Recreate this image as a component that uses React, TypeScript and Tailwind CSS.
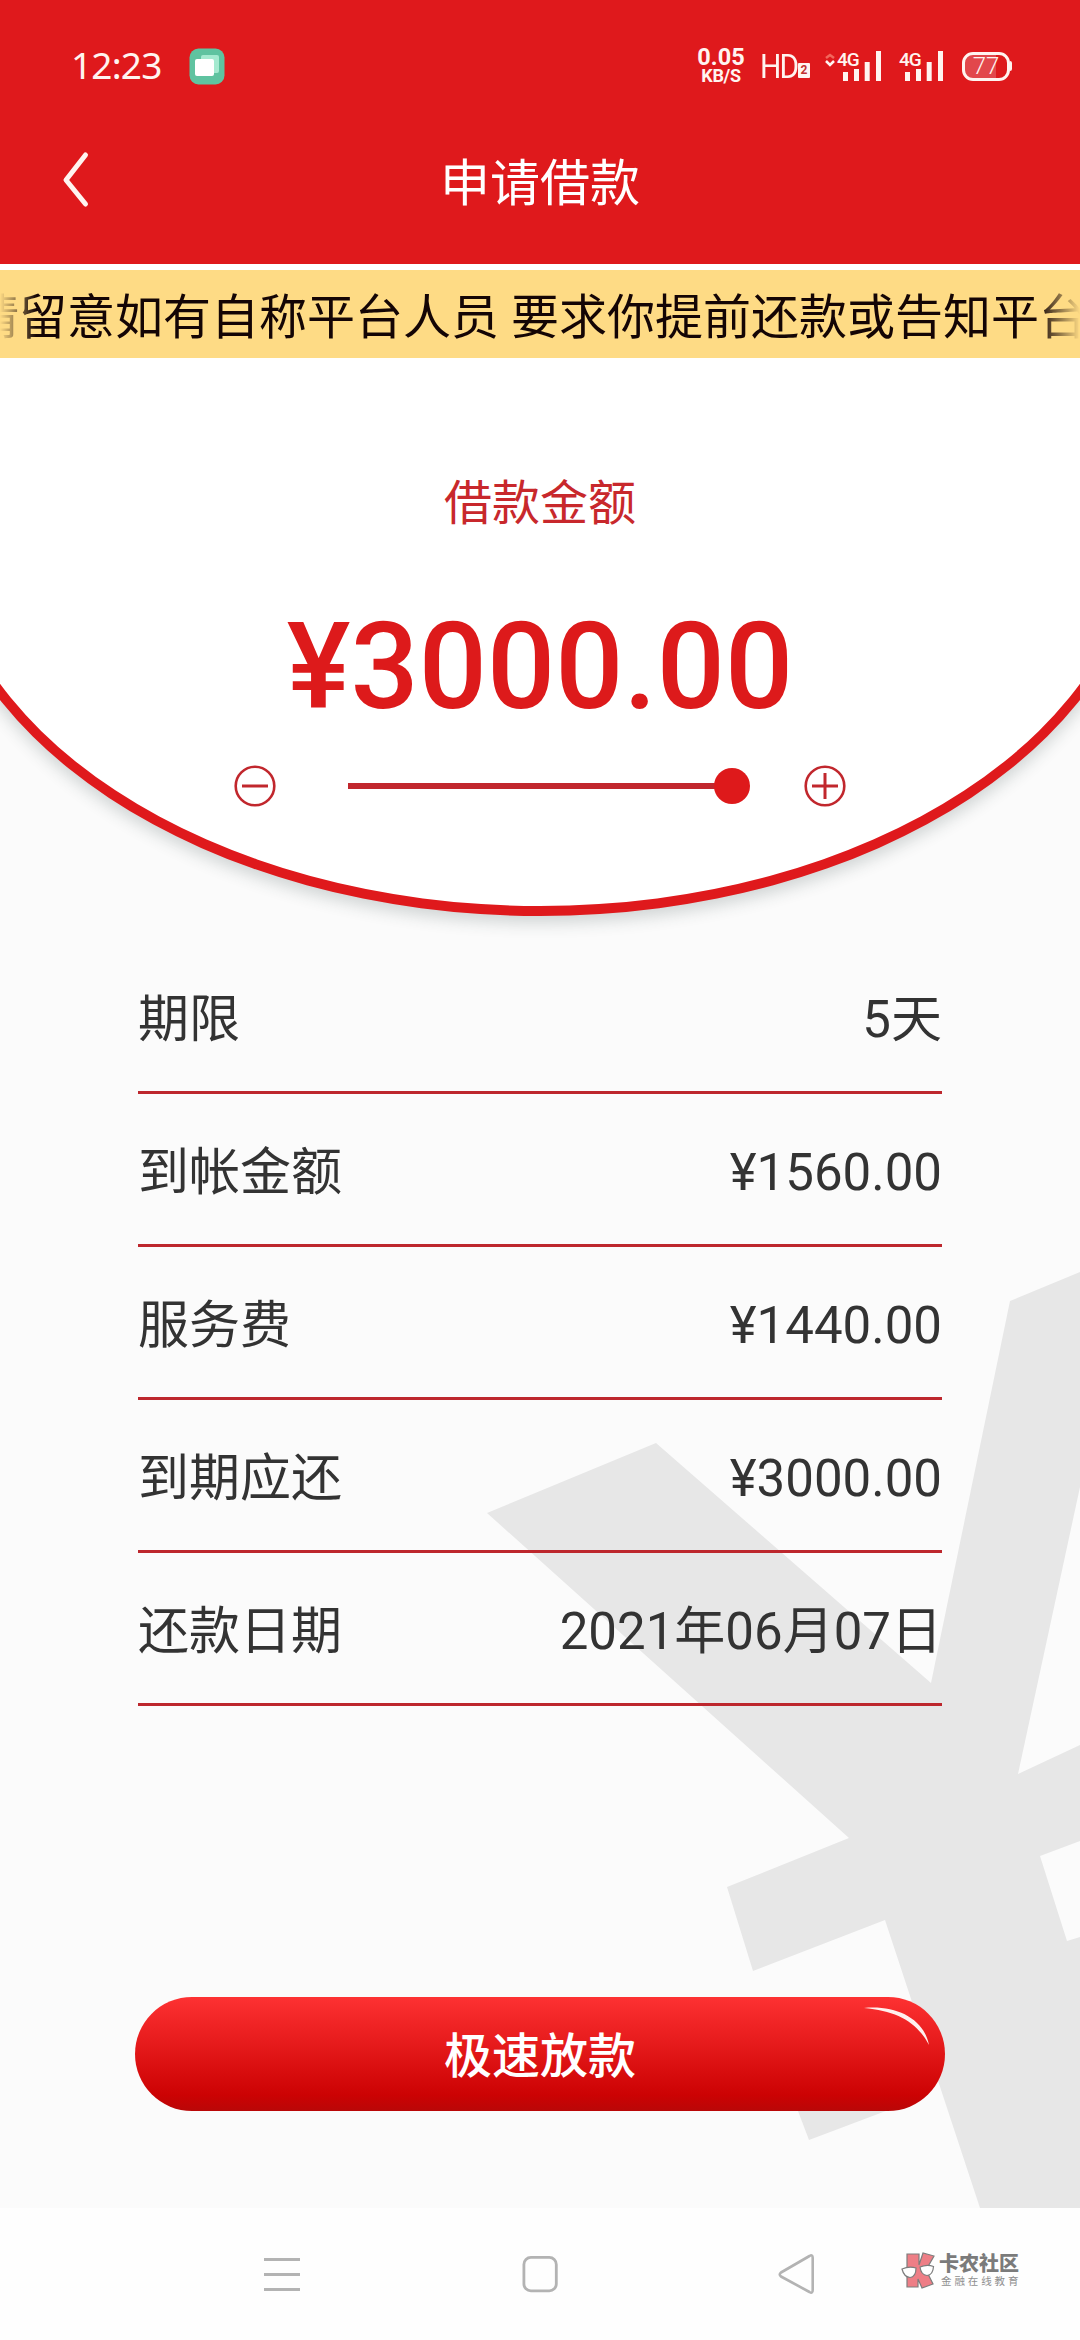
import React from "react";

interface DetailItem {
  label: string;
  value: string;
}

const details: DetailItem[] = [
  { label: "期限", value: "5天" },
  { label: "到帐金额", value: "¥1560.00" },
  { label: "服务费", value: "¥1440.00" },
  { label: "到期应还", value: "¥3000.00" },
  { label: "还款日期", value: "2021年06月07日" },
];

const SignalBars: React.FC = () => (
  <div className="relative w-[44px] h-[30px]">
    <span className="absolute left-0 top-[1px] text-[19px] leading-[16px] font-medium tracking-[-1px]">4G</span>
    <svg className="w-[44px] h-[30px]" viewBox="0 0 44 30" fill="#fff4f0">
      <rect x="6" y="21" width="5" height="9" />
      <rect x="17" y="18" width="5" height="12" />
      <rect x="27.7" y="11" width="5" height="19" />
      <rect x="39" y="0" width="5" height="30" />
    </svg>
  </div>
);

const StatusBar: React.FC = () => (
  <div className="h-[132px] flex items-center pl-[71px] pr-[68px] text-[#fff4f0]">
    <span className="w-[118px] text-[37px] leading-none tracking-[-0.8px] -mt-[3px] font-['Noto_Sans',sans-serif]">12:23</span>
    <svg className="w-[36px] h-[37px]" viewBox="0 0 36 37">
      <rect x="0.5" y="0.5" width="35" height="36" rx="9" fill="#5fc3a0" />
      <rect x="12" y="7" width="18" height="18" rx="2" fill="#a5ead0" />
      <rect x="6" y="11" width="19" height="17" rx="2" fill="#ffffff" />
    </svg>
    <div className="ml-auto flex items-center">
      <div className="w-[48px] flex flex-col items-center font-bold">
        <span className="text-[23.5px] leading-[20px]">0.05</span>
        <span className="text-[18px] leading-[18px] tracking-[-0.3px]">KB/S</span>
      </div>
      <div className="ml-[15px] w-[51px] flex items-end">
        <span className="w-[38px] text-[34px] leading-[30px] font-normal tracking-[-2px] origin-left scale-x-[0.88]">HD</span>
        <span className="mb-[3px] w-[12px] h-[15px] rounded-[1px] bg-[#fff4f0] text-[#c03030] text-[12px] leading-[15px] font-bold text-center">2</span>
      </div>
      <svg className="ml-[14px] mb-[12px] w-[10px] h-[14px]" viewBox="0 0 10 14" fill="none" strokeWidth="2.5">
        <path d="M1 5 L5 2 L9 5" stroke="#f2675c" />
        <path d="M1 8 L5 12 L9 8" stroke="#fff4f0" />
      </svg>
      <div className="ml-[2px]">
        <SignalBars />
      </div>
      <div className="ml-[18px]">
        <SignalBars />
      </div>
      <div className="ml-[19px] flex items-center">
        <div className="w-[48px] h-[29px] rounded-[11px] border-[3px] border-[#fff4f0] bg-[linear-gradient(to_right,#e2474b_74%,#dd1a1c_74%)] flex items-center justify-center text-[24px] leading-none font-light">
          77
        </div>
        <div className="w-[2px] h-[10px] rounded-r bg-[#fff4f0]" />
      </div>
    </div>
  </div>
);

const Header: React.FC = () => (
  <header className="h-[264px] shrink-0 bg-[#df191c]">
    <StatusBar />
    <div className="h-[102px] grid grid-cols-[1fr_auto_1fr] items-center text-white">
      <svg className="ml-[62px] mb-[7px] w-[30px] h-[58px]" viewBox="0 0 30 58" fill="none">
        <path d="M23.500 4 L4 29 L23.500 53" stroke="#fff4f0" strokeWidth="5" strokeLinecap="round" strokeLinejoin="round" />
      </svg>
      <h1 className="pt-[2px] text-[50px] leading-none font-normal">申请借款</h1>
    </div>
  </header>
);

const Notice: React.FC = () => (
  <div className="mt-[6px] h-[88px] shrink-0 bg-[#fedb85] overflow-hidden">
    <p className="h-full pt-[7px] flex items-center text-[48px] leading-none text-[#140505] whitespace-nowrap [mask-image:linear-gradient(to_right,transparent,black_36px,black_1038px,transparent)]">
      <span className="-ml-[29px] whitespace-pre">请留意如有自称平台人员 要求你提前还款或告知平台</span>
    </p>
  </div>
);

const AmountPicker: React.FC = () => (
  <section className="h-[600px] flex justify-center overflow-hidden">
    <div className="shrink-0 -mt-[250px] w-[1220px] h-[808px] rounded-[50%] border-[10.5px] border-[#df191c] bg-white shadow-[0_7px_16px_rgba(40,60,60,0.2)] flex flex-col items-center">
      <p className="mt-[358px] text-[48px] leading-[56px] text-[#c8282c]">借款金额</p>
      <p className="mt-[65px] text-[120px] leading-[140px] font-medium text-[#dd1a1b]">¥3000.00</p>
      <div className="mt-[27px] w-[612px] h-[44px] flex items-center">
        <svg className="w-[42px] h-[42px]" viewBox="0 0 42 42" fill="none" stroke="#c1272d" strokeWidth="2.6">
          <circle cx="21" cy="21" r="19.3" />
          <path d="M8 21 H34" strokeWidth="3" />
        </svg>
        <div className="ml-[72px] w-[402px] flex items-center">
          <div className="h-[6px] flex-1 bg-[#c1272d]" />
          <div className="-ml-[2px] w-[36px] h-[36px] rounded-full bg-[#de191b]" />
        </div>
        <svg className="ml-auto w-[42px] h-[42px]" viewBox="0 0 42 42" fill="none" stroke="#c1272d" strokeWidth="2.6">
          <circle cx="21" cy="21" r="19.3" />
          <path d="M8 21 H34 M21 8 V34" strokeWidth="3" />
        </svg>
      </div>
    </div>
  </section>
);

const YuanMark: React.FC = () => (
  <svg className="absolute inset-0 w-full h-full" viewBox="0 358 1080 1850" fill="#e7e7e7">
    <path d="M487 1513 L656 1443 L931 1683 L1010 1301 L1080 1272 V1487 L1018 1774 L1080 1745 V1841 L1040 1856 L1067 1941 L1080 1937 V2208 H980 L885 1920 L753 1971 L727 1887 L849 1838 Z" />
    <path d="M790 2090 L809 2140 L915 2100 Z" />
  </svg>
);

const NavBar: React.FC = () => (
  <nav className="h-[132px] shrink-0 bg-[#fefefe] flex items-center">
    <svg className="ml-[262px] w-[40px] h-[44px]" viewBox="0 0 40 44" stroke="#b3b3b3" strokeWidth="2.8">
      <path d="M2 7.5 H38 M2 22.5 H38 M2 37.5 H38" />
    </svg>
    <svg className="ml-[218px] w-[40px] h-[44px]" viewBox="0 0 40 44" fill="none" stroke="#b3b3b3" strokeWidth="2.8">
      <rect x="3.9" y="5.4" width="32.4" height="33.5" rx="7" />
    </svg>
    <svg className="ml-[215px] w-[42px] h-[44px]" viewBox="0 0 42 44" fill="none" stroke="#b3b3b3" strokeWidth="2.6">
      <path d="M34.5 4 Q37.7 2 37.7 6 V38 Q37.7 42 34.5 40 L6 24.5 Q3.5 22.5 6 20.5 Z" strokeLinejoin="round" />
    </svg>
    <div className="ml-[84px] mb-[7px] flex items-center">
      <svg className="w-[36px] h-[38px]" viewBox="0 0 36 38" stroke="#7d7d7d" strokeWidth="1.2">
        <path d="M6 2 H18 V13 L22 1 L33 4 L25 18 L32 32 L21 36 L17 27 V35 H6 Z" fill="#ee7e86" />
        <path d="M1 17 Q8 14 15 16 Q15 25 9 25.500 Q3 25 1 17 Z M19 15 Q26 12 32.500 14.500 Q32 23 26 23.500 Q20 23 19 15 Z" fill="#fff" />
      </svg>
      <div className="ml-[2px] flex flex-col">
        <span className="text-[20px] leading-[22px] font-black text-[#7b7b7b]">卡农社区</span>
        <span className="ml-[2px] text-[10.5px] leading-[14px] tracking-[2.9px] text-[#8f8f8f]">金融在线教育</span>
      </div>
    </div>
  </nav>
);

export default function App() {
  return (
    <main className="w-[1080px] h-[2340px] flex flex-col overflow-hidden bg-white font-['Roboto','Noto_Sans_CJK_SC',sans-serif]">
      <Header />
      <Notice />
      <div className="relative h-[1850px] shrink-0 bg-[#fbfbfb]">
        <YuanMark />
        <div className="relative h-full flex flex-col">
          <AmountPicker />
          <div className="-mt-[17px] mx-[138px]">
            {details.map((item) => (
              <div
                key={item.label}
                className="h-[153px] pt-[7px] border-b-[3px] border-[#bd272d] flex items-center justify-between text-[51px] leading-none text-[#333333]"
              >
                <span>{item.label}</span>
                <span>{item.value}</span>
              </div>
            ))}
          </div>
          {/* Submit button with the glossy highlight in its corner */}
          <button className="relative mt-[291px] mx-auto w-[810px] h-[114px] pt-[6px] rounded-full bg-[linear-gradient(to_bottom,#fd3132,#cc0203_86%,#b90707)] text-white text-[48px] leading-none font-medium">
            极速放款
            <svg className="absolute right-[12px] top-[8px] w-[72px] h-[44px]" viewBox="0 0 72 44">
              <path d="M3 3 C36 0 63 14 68 40 C56 17 36 6 3 3 Z" fill="#fff0ee" />
            </svg>
          </button>
        </div>
      </div>
      <NavBar />
    </main>
  );
}
